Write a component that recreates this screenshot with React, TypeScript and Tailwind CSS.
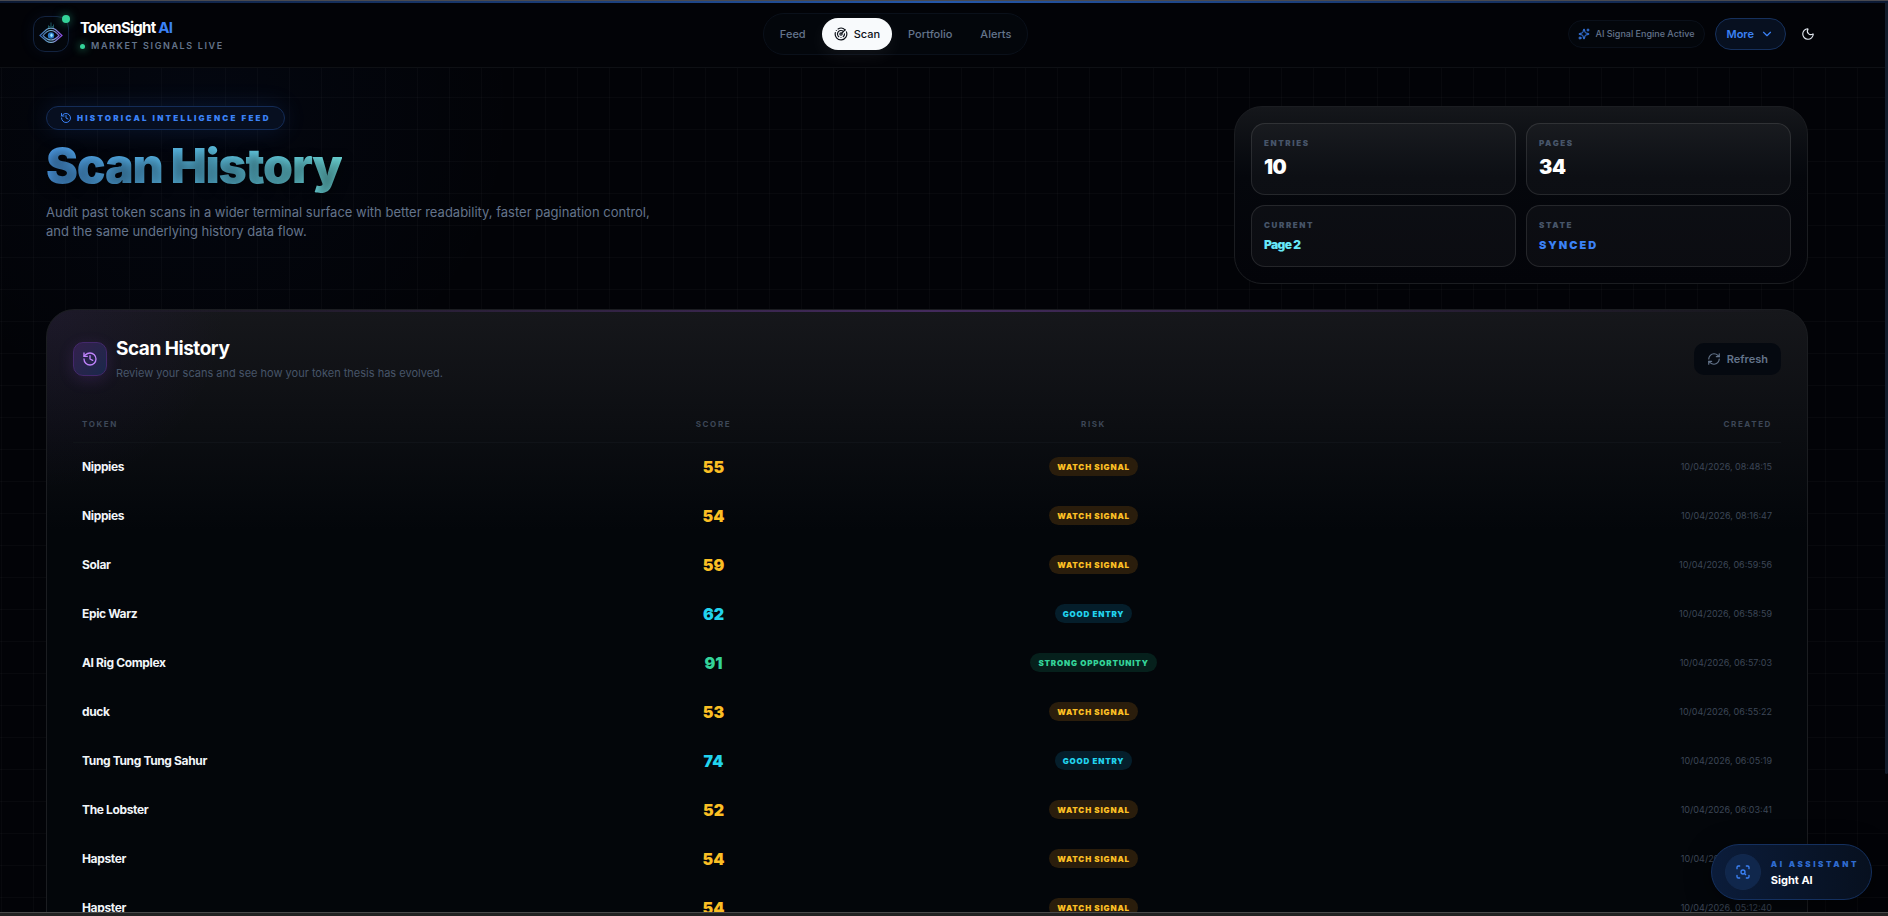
import React, { useState } from 'react';
import { ChevronDown, History, Moon, Radar, RefreshCw, ScanSearch, Sparkles } from 'lucide-react';
import clsx from 'clsx';

type Risk = 'WATCH SIGNAL' | 'GOOD ENTRY' | 'STRONG OPPORTUNITY';

interface Scan {
  token: string;
  score: number;
  risk: Risk;
  created: string;
}

const scans: Scan[] = [
  { token: 'Nippies', score: 55, risk: 'WATCH SIGNAL', created: '10/04/2026, 08:48:15' },
  { token: 'Nippies', score: 54, risk: 'WATCH SIGNAL', created: '10/04/2026, 08:16:47' },
  { token: 'Solar', score: 59, risk: 'WATCH SIGNAL', created: '10/04/2026, 06:59:56' },
  { token: 'Epic Warz', score: 62, risk: 'GOOD ENTRY', created: '10/04/2026, 06:58:59' },
  { token: 'AI Rig Complex', score: 91, risk: 'STRONG OPPORTUNITY', created: '10/04/2026, 06:57:03' },
  { token: 'duck', score: 53, risk: 'WATCH SIGNAL', created: '10/04/2026, 06:55:22' },
  { token: 'Tung Tung Tung Sahur', score: 74, risk: 'GOOD ENTRY', created: '10/04/2026, 06:05:19' },
  { token: 'The Lobster', score: 52, risk: 'WATCH SIGNAL', created: '10/04/2026, 06:03:41' },
  { token: 'Hapster', score: 54, risk: 'WATCH SIGNAL', created: '10/04/2026, 05:13:08' },
  { token: 'Hapster', score: 54, risk: 'WATCH SIGNAL', created: '10/04/2026, 05:12:40' },
];

const scoreColor: Record<Risk, string> = {
  'WATCH SIGNAL': 'text-[#fbbf24]',
  'GOOD ENTRY': 'text-[#22d3ee]',
  'STRONG OPPORTUNITY': 'text-[#34d399]',
};

const badgeColor: Record<Risk, string> = {
  'WATCH SIGNAL': 'bg-[#2a1d0c] text-[#fbbf24]',
  'GOOD ENTRY': 'bg-[#051e2b] text-[#22d3ee]',
  'STRONG OPPORTUNITY': 'bg-[#06201c] text-[#34d399]',
};

function Logo() {
  return (
    <div className="relative flex size-9 items-center justify-center rounded-xl border border-[#13233f] bg-[#03060c] shadow-[0_0_16px_rgba(59,130,246,0.08)]">
      <svg viewBox="0 0 24 24" className="size-6" fill="none" aria-hidden="true">
        <defs>
          <linearGradient id="eye" x1="0" y1="0" x2="24" y2="0" gradientUnits="userSpaceOnUse">
            <stop offset="0" stopColor="#2f5fae" />
            <stop offset="0.5" stopColor="#7cb4d0" />
            <stop offset="1" stopColor="#8b3fe0" />
          </linearGradient>
        </defs>
        <path d="M1 13.5 L7.500 7.500 Q12 4.800 16.500 7.500 L23 13.5 L16.500 19 Q12 21.800 7.500 19Z" stroke="url(#eye)" strokeWidth="1.200" />
        <path d="M4 13.5 Q8 8.500 12 8.500 T20 13.5 Q16 18 12 18 T4 13.5Z" stroke="url(#eye)" strokeWidth="1.200" />
        <circle cx="12" cy="13.500" r="3.200" fill="#2a78c4" />
        <ellipse cx="12.500" cy="13.300" rx="1.200" ry="1.800" fill="#9be4ff" />
        <path d="M12 5.500V0.500M9.500 6V3.500M14.500 6V2.500M9.500 4L12 5.500L14.500 4" stroke="#1b5560" strokeWidth="1" />
      </svg>
      <span className="absolute -top-[2px] -right-[2px] size-2 rounded-full bg-[#34d399] shadow-[0_0_10px_rgba(52,211,153,0.6)]" />
    </div>
  );
}

function Header() {
  const [active, setActive] = useState('Scan');

  return (
    <header className="relative z-10 flex items-center justify-between border-b border-[#0e1014] bg-[#020307] pt-3 pr-[68px] pb-3 pl-[33px]">
      <div className="flex items-center gap-[11px]">
        <Logo />
        <div className="pt-1">
          <div className="text-[15px] leading-5 font-bold tracking-tighter text-white">
            TokenSight <span className="text-[#3b82f6]">AI</span>
          </div>
          <div className="flex items-center gap-[6px] text-[9px] leading-4 font-semibold tracking-[0.18em] text-[#64748b]">
            <span className="size-[5px] rounded-full bg-[#34d399] shadow-[0_0_8px_#34d399]" />
            MARKET SIGNALS LIVE
          </div>
        </div>
      </div>

      <nav className="flex items-center gap-1 rounded-full border border-[#0a101a] bg-[#03060b] p-1">
        {['Feed', 'Scan', 'Portfolio', 'Alerts'].map((item) => (
          <a
            key={item}
            href={`#${item.toLowerCase()}`}
            onClick={() => setActive(item)}
            className={clsx(
              'flex h-8 items-center gap-[6px] rounded-full px-3 text-[11px] font-medium',
              item === active ? 'bg-[#f8fafc] text-[#0b0f17] shadow-[0_6px_18px_rgba(255,255,255,0.06)]' : 'text-[#64748b]'
            )}
          >
            {item === 'Scan' && <Radar className="size-[14px]" />}
            {item}
          </a>
        ))}
      </nav>

      <div className="flex items-center justify-end gap-[10px]">
        <div className="flex h-7 items-center gap-[6px] rounded-full border border-[#0a101a] bg-[#03060b] px-[9px] text-[9px] font-medium text-[#64748b]">
          <Sparkles className="size-3 text-[#3b82f6]" />
          AI Signal Engine Active
        </div>
        <button className="flex h-8 items-center gap-[6px] rounded-full border border-[#16305c] bg-[#071020] px-[11px] text-[11px] font-semibold text-[#3b82f6]">
          More
          <ChevronDown className="size-[14px]" />
        </button>
        <button aria-label="Toggle theme" className="flex size-6 items-center justify-center text-[#e2e8f0]">
          <Moon className="size-[14px]" />
        </button>
      </div>
    </header>
  );
}

function Stat({ label, children }: { label: string; children: React.ReactNode }) {
  return (
    <div className="rounded-[14px] border border-white/10 bg-white/[0.035] px-3 py-[13px]">
      <div className="text-[8px] leading-3 font-black tracking-[0.2em] text-[#475569]">{label}</div>
      {children}
    </div>
  );
}

function Hero() {
  return (
    <section className="grid grid-cols-[1fr_574px] items-start">
      <div>
        <div className="flex h-6 w-fit items-center gap-[5px] rounded-full border border-[#142c57] bg-[#070f20] px-[13px] text-[8px] font-black tracking-[0.28em] text-[#3b82f6] shadow-[0_0_24px_rgba(59,130,246,0.14)]">
          <History className="size-3" />
          HISTORICAL INTELLIGENCE FEED
        </div>
        <h1 className="mt-[10px] w-fit bg-gradient-to-r from-[#4f9fee] via-[#5cc0e8] to-[#6edcdc] bg-clip-text pb-1 text-5xl leading-[52px] font-black tracking-tight text-transparent [text-shadow:0_4px_12px_rgba(0,0,0,0.5)]">
          Scan History
        </h1>
        <p className="mt-[7px] max-w-[620px] text-[13px] leading-[19px] text-[#64748b]">
          Audit past token scans in a wider terminal surface with better readability, faster pagination control, and the same underlying history data flow.
        </p>
      </div>

      <div className="grid grid-cols-2 gap-[10px] rounded-[28px] border border-[#1b1d21] bg-gradient-to-b from-[#15171b] via-[#05070c] via-40% to-[#030409] p-4">
        <Stat label="ENTRIES">
          <div className="mt-1 text-xl leading-7 font-black tracking-tight text-white">10</div>
        </Stat>
        <Stat label="PAGES">
          <div className="mt-1 text-xl leading-7 font-black tracking-tight text-white">34</div>
        </Stat>
        <Stat label="CURRENT">
          <div className="mt-[6px] text-xs leading-4 font-black tracking-tighter text-[#67e8f9]">Page 2</div>
        </Stat>
        <Stat label="STATE">
          <div className="mt-[6px] text-[11px] leading-4 font-black tracking-[0.18em] text-[#3b82f6]">SYNCED</div>
        </Stat>
      </div>
    </section>
  );
}

function HistoryPanel() {
  return (
    <section className="relative mt-[25px] rounded-[28px] border border-[#1b1d21] bg-[#03060a] bg-[radial-gradient(circle_at_0_0,rgba(124,58,237,0.07),transparent_180px),linear-gradient(to_bottom,#16171b,#03060a_220px)] px-[26px] pt-[27px] pb-6">
      <div className="absolute inset-x-7 top-0 h-[2px] bg-gradient-to-r from-transparent via-[#432a5c] to-transparent" />
      <div className="flex items-center justify-between">
        <div className="flex items-center gap-[9px]">
          <div className="flex size-[34px] items-center justify-center rounded-[10px] border border-[#43286b] bg-gradient-to-br from-[#33204d] to-[#18284a] text-[#c084fc] shadow-[0_4px_16px_rgba(168,85,247,0.15)]">
            <History className="size-4" />
          </div>
          <div>
            <h2 className="text-[19px] leading-6 font-bold tracking-tight text-white">Scan History</h2>
            <p className="mt-1 text-[11px] leading-4 text-[#475569]">Review your scans and see how your token thesis has evolved.</p>
          </div>
        </div>
        <button className="flex h-8 items-center gap-[6px] rounded-[10px] bg-[#050910] px-[13px] text-[11px] font-semibold text-[#64748b]">
          <RefreshCw className="size-[14px]" />
          Refresh
        </button>
      </div>

      <table className="mt-[25px] w-full table-fixed">
        <colgroup>
          <col className="w-[28%]" />
          <col className="w-[19%]" />
          <col className="w-[25.5%]" />
          <col className="w-[27.5%]" />
        </colgroup>
        <thead>
          <tr className="h-9 border-b border-[#101318] text-[8px] tracking-[0.2em] text-[#3d4757]">
            <th className="px-[9px] text-left font-bold">TOKEN</th>
            <th className="text-center font-bold">SCORE</th>
            <th className="text-center font-bold">RISK</th>
            <th className="px-[9px] text-right font-bold">CREATED</th>
          </tr>
        </thead>
        <tbody>
          {scans.map((scan) => (
            <tr key={scan.created} className="h-[49px]">
              <td className="px-[9px] text-xs font-bold tracking-[-0.03em] text-[#f1f5f9]">{scan.token}</td>
              <td className={clsx('text-center text-base font-black', scoreColor[scan.risk])}>{scan.score}</td>
              <td>
                <span className={clsx('mx-auto flex h-[19px] w-fit items-center rounded-full px-2 text-[8px] font-black tracking-widest', badgeColor[scan.risk])}>
                  {scan.risk}
                </span>
              </td>
              <td className="px-[9px] text-right text-[9px] text-[#3d4757]">{scan.created}</td>
            </tr>
          ))}
        </tbody>
      </table>
    </section>
  );
}

function AssistantButton() {
  return (
    <button className="absolute right-4 bottom-4 z-20 flex h-14 items-center gap-[10px] rounded-full border border-[#14305f] bg-gradient-to-r from-[#0b1c3a] to-[#07101f] pr-3 pl-[13px] text-left shadow-[0_4px_24px_rgba(0,0,0,0.5)]">
      <span className="flex size-9 items-center justify-center rounded-full border border-[#13294d] bg-[#10274c] text-[#3b82f6]">
        <ScanSearch className="size-4" />
      </span>
      <span className="flex flex-col">
        <span className="text-[8px] leading-4 font-black tracking-[0.32em] text-[#2f6bd0]">AI ASSISTANT</span>
        <span className="text-[11px] leading-4 font-bold text-white">Sight AI</span>
      </span>
    </button>
  );
}

export default function App() {
  return (
    <div className="relative flex h-screen flex-col overflow-hidden border-t border-[#4a4a50] bg-[#020307] bg-[linear-gradient(to_right,rgba(255,255,255,0.022)_1px,transparent_1px),linear-gradient(to_bottom,rgba(255,255,255,0.022)_1px,transparent_1px)] bg-[length:32px_32px] bg-[position:1px_0px] font-['Inter','Liberation_Sans',sans-serif]">
      <div className="absolute inset-x-0 top-0 z-20 h-[2px] bg-gradient-to-r from-[#0c1a34] via-[#2456a8] to-[#0c1a34]" />
      <Header />
      <main className="min-h-0 flex-1 overflow-hidden bg-[radial-gradient(circle_at_200px_40px,rgba(37,99,235,0.04),transparent_320px)] pt-[38px] pr-20 pl-[46px]">
        <Hero />
        <HistoryPanel />
      </main>
      <AssistantButton />
      <div className="absolute top-0 right-0 z-10 h-[773px] w-[3px] rounded-b bg-[#121c2b]" />
      <footer className="relative z-30 h-1 shrink-0 border-t border-[#4a4a4a] bg-[#222222]" />
    </div>
  );
}
